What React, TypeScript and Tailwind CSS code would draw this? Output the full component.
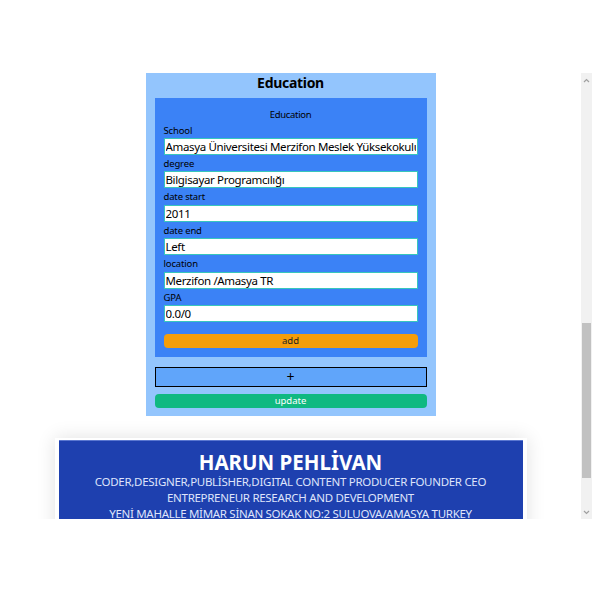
import React, { useEffect, useRef } from "react";

const font = { fontFamily: '"Noto Sans", "Open Sans", sans-serif' };

type Field = { label: string; value: string };

function Panel({ title, fields, panelRef }: { title: string; fields: Field[]; panelRef?: React.Ref<HTMLDivElement> }) {
  return (
    <div ref={panelRef} className="w-[290px] mx-auto bg-[#93c5fd] px-[9px] pt-[9px] pb-[8px]">
      <h2 className="text-[14px] tracking-[-0.3px] font-bold leading-[20px] text-center text-black">{title}</h2>
      <div className="mt-[5px] bg-[#3b82f6] px-[9px] pt-[10px] pb-[9px]">
        <div className="text-[9.5px] tracking-[-0.3px] leading-[13.6px] text-center text-black">{title}</div>
        {fields.map((f) => (
          <div key={f.label} className="flex flex-col">
            <label className="block text-[9.5px] tracking-[-0.15px] leading-[16.4px] h-[16.4px] pt-[1px] text-black">
              {f.label}
            </label>
            <input
              readOnly
              value={f.value}
              className="block h-[17px] w-full bg-white border border-[#38c6bd] px-[1px] text-[11.5px] tracking-[-0.35px] leading-[15px] text-black outline-none"
            />
          </div>
        ))}
        <button className="block mt-[12px] h-[14px] w-full rounded-[4px] bg-[#f59e0b] text-[9.5px] leading-[14px] text-[#1f1f1f]">
          add
        </button>
      </div>
      <button className="block mt-[10px] h-[20px] w-full border-[1.5px] border-black bg-[#60a5fa] text-[14px] leading-[16px] text-black">
        +
      </button>
      <button className="block mt-[7px] h-[14px] w-full rounded-[4px] bg-[#10b981] text-[9.5px] leading-[14px] text-white">
        update
      </button>
    </div>
  );
}

const personal: Field[] = [
  { label: "name", value: "HARUN PEHLİVAN" },
  { label: "title", value: "CODER,DESIGNER,PUBLİSHER" },
  { label: "address", value: "YENİ MAHALLE MİMAR SİNAN SOKAK NO:2" },
  { label: "city", value: "SULUOVA/AMASYA" },
  { label: "country", value: "TURKEY" },
  { label: "phone", value: "+90" },
  { label: "email", value: "harun@example.com" },
  { label: "website", value: "" },
  { label: "linkedin", value: "" },
  { label: "github", value: "" },
  { label: "birth date", value: "" },
  { label: "nationality", value: "TR" },
  { label: "driving license", value: "B" },
  { label: "summary", value: "" },
];

const education: Field[] = [
  { label: "School", value: "Amasya Üniversitesi Merzifon Meslek Yüksekokulu" },
  { label: "degree", value: "Bilgisayar Programcılığı" },
  { label: "date start", value: "2011" },
  { label: "date end", value: "Left" },
  { label: "location", value: "Merzifon /Amasya TR" },
  { label: "GPA", value: "0.0/0" },
];

function Chevron({ up }: { up?: boolean }) {
  return (
    <svg width="7" height="5" viewBox="0 0 7 5" className="block">
      <polyline
        points={up ? "1,4 3.5,1.5 6,4" : "1,1 3.5,3.5 6,1"}
        fill="none"
        stroke="#a0a0a0"
        strokeWidth="1.2"
      />
    </svg>
  );
}

export default function App() {
  const scrollRef = useRef<HTMLDivElement>(null);
  const eduRef = useRef<HTMLDivElement>(null);

  useEffect(() => {
    if (scrollRef.current && eduRef.current) {
      scrollRef.current.scrollTop = eduRef.current.offsetTop + 9;
    }
  }, []);

  return (
    <div className="h-screen w-full bg-white flex items-center" style={font}>
      <div className="h-[446px] w-full flex">
        <div ref={scrollRef} className="relative flex-1 h-full overflow-hidden bg-white">
          <div className="flex flex-col gap-[22px] pt-[20px] pb-[50px]">
            <Panel title="Personal" fields={personal} />
            <Panel title="Education" fields={education} panelRef={eduRef} />
            <div className="w-[472px] mx-auto bg-white px-[4px] pt-[2px] pb-[4px] shadow-[0_0_18px_rgba(0,0,0,0.12)]">
              <div className="bg-[#1e40af] border-t border-[#5a77d0] pt-[9px] pb-[10px] text-center">
                <div className="text-[20.5px] font-bold leading-[24px] text-white">HARUN PEHLİVAN</div>
                <div className="text-[11.5px] tracking-[-0.3px] leading-[16px] text-[#dfe4fb]">
                  CODER,DESIGNER,PUBLİSHER,DIGITAL CONTENT PRODUCER FOUNDER CEO
                </div>
                <div className="text-[11.5px] tracking-[-0.3px] leading-[16px] text-[#dfe4fb]">
                  ENTREPRENEUR RESEARCH AND DEVELOPMENT
                </div>
                <div className="text-[11.5px] tracking-[-0.3px] leading-[16px] text-[#dfe4fb]">
                  YENİ MAHALLE MİMAR SİNAN SOKAK NO:2 SULUOVA/AMASYA TURKEY
                </div>
                <div className="text-[11.5px] tracking-[-0.3px] leading-[16px] text-[#dfe4fb]">harun@example.com</div>
              </div>
            </div>
          </div>
        </div>
        <div className="w-[11px] h-full bg-[#f1f1f1] flex flex-col">
          <div className="h-[14px] flex items-center justify-center">
            <Chevron up />
          </div>
          <div className="flex-1">
            <div className="mt-[236px] h-[155px] mx-[1px] bg-[#c1c1c1]" />
          </div>
          <div className="h-[14px] flex items-center justify-center">
            <Chevron />
          </div>
        </div>
      </div>
    </div>
  );
}
